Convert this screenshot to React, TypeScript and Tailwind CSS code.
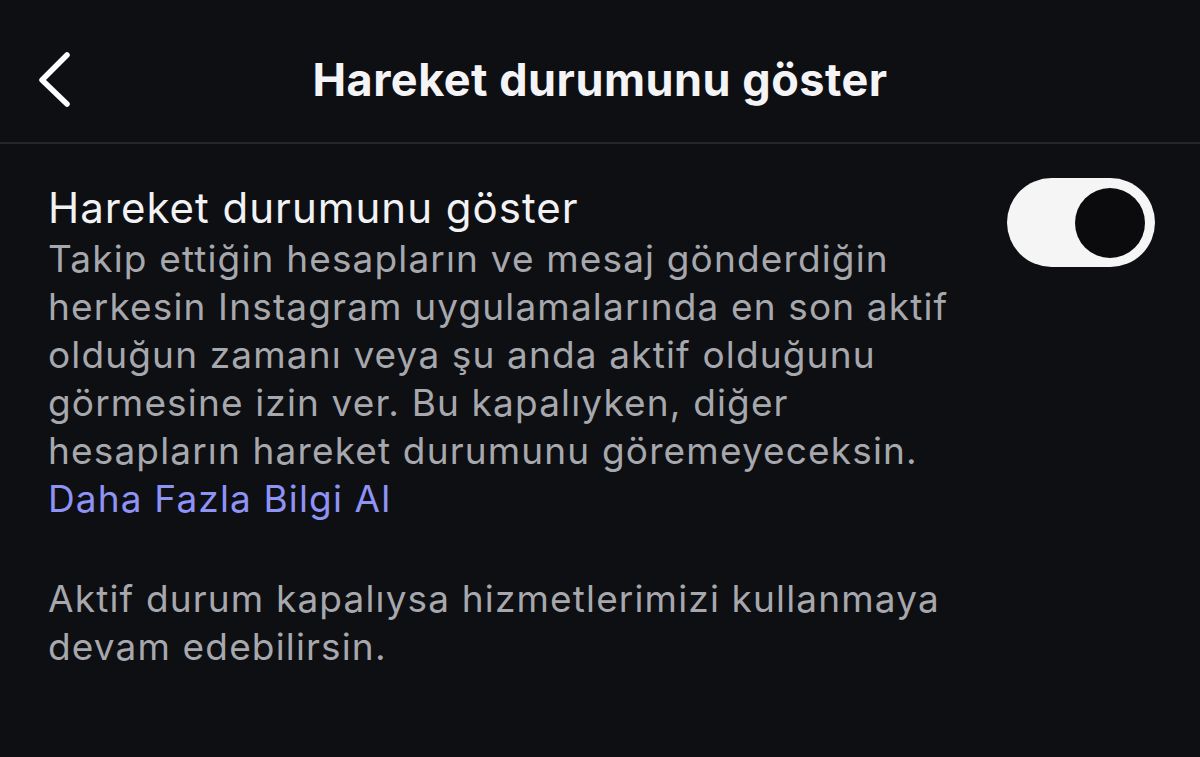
export default function App() {
  const body = [
    "Takip ettiğin hesapların ve mesaj gönderdiğin",
    "herkesin Instagram uygulamalarında en son aktif",
    "olduğun zamanı veya şu anda aktif olduğunu",
    "görmesine izin ver. Bu kapalıyken, diğer",
    "hesapların hareket durumunu göremeyeceksin.",
  ];
  return (
    <div className="min-h-screen w-full bg-[#0e0f13] font-['Inter','Roboto',sans-serif] text-white">
      <header className="relative flex h-[144px] items-center justify-center border-b-2 border-[#26272c] pt-[18px]">
        <button className="absolute left-[36px] top-[50px]">
          <svg width="38" height="58" viewBox="0 0 38 58" fill="none">
            <path d="M31 5 L6 30 L31 54" stroke="white" strokeWidth="5.5" strokeLinecap="round" strokeLinejoin="round" />
          </svg>
        </button>
        <h1 className="text-[45px] font-bold leading-[54px] tracking-[0.5px] text-[#f4f4f6]">Hareket durumunu göster</h1>
      </header>

      <main className="px-[48px] pt-[37px]">
        <div className="flex items-start justify-between">
          <div>
            <div className="text-[42px] leading-[54px] tracking-[1px] text-[#f2f2f4]">Hareket durumunu göster</div>
            <div className="text-[37px] leading-[48px] tracking-[1.15px] text-[#a7a8ad]">
              {body.map((l) => (
                <div key={l}>{l}</div>
              ))}
              <div className="text-[#8f93f5]">Daha Fazla Bilgi Al</div>
            </div>
          </div>
          <div className="mr-[-3px] mt-[-3px] flex h-[89px] w-[148px] items-center justify-end rounded-full bg-[#f5f5f6] pr-[10px]">
            <div className="h-[70px] w-[70px] rounded-full bg-[#0b0b0e]" />
          </div>
        </div>

        <div className="mt-[52px] text-[37px] leading-[48px] tracking-[1.15px] text-[#a7a8ad]">
          <div>Aktif durum kapalıysa hizmetlerimizi kullanmaya</div>
          <div>devam edebilirsin.</div>
        </div>
      </main>
    </div>
  );
}
